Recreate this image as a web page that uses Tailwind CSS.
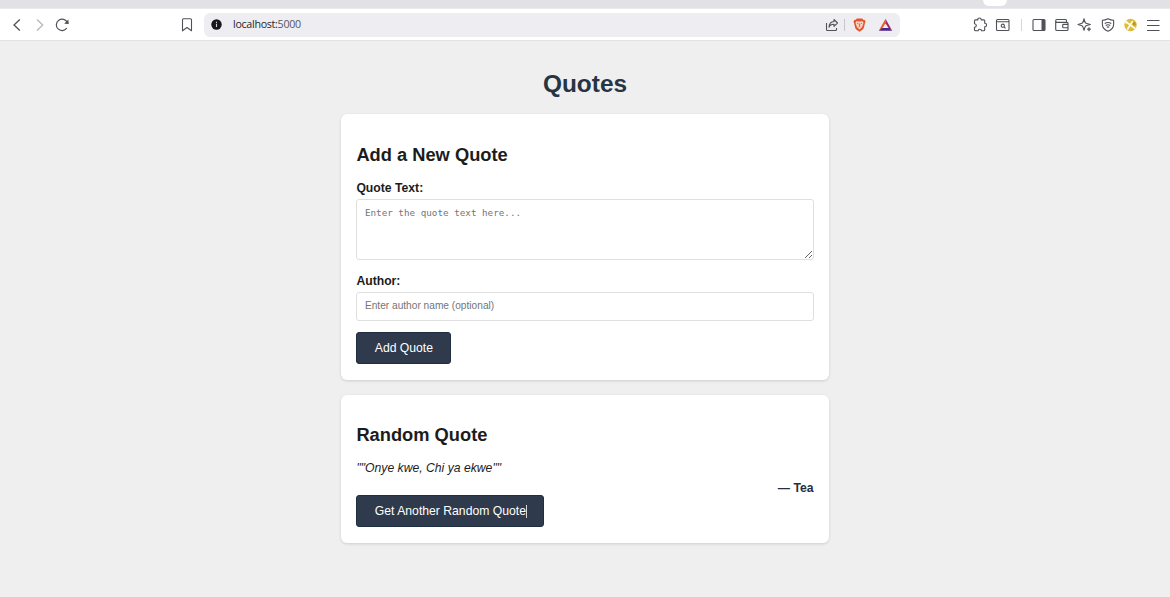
<!DOCTYPE html>
<html lang="en">
<head>
  <meta charset="UTF-8" />
  <meta name="viewport" content="width=device-width, initial-scale=1" />
  <title>Quotes</title>
  <script src="https://cdn.jsdelivr.net/npm/@tailwindcss/browser@4"></script>
</head>
<body class="h-screen overflow-hidden bg-[#efefef] font-['Liberation_Sans',Arial,sans-serif] text-[12.2px] text-[#1c1c1c]">

  <!-- Tab strip -->
  <div class="flex h-[9px] border-b border-[#e9e9ee] bg-[#e1e1e6] pl-[983px]">
    <div class="h-[6px] w-6 rounded-b-md bg-white"></div>
  </div>

  <!-- Toolbar -->
  <div class="flex h-8 items-center border-b border-[#e2e2e2] bg-white text-[#505258]">
    <div class="flex w-[204px] items-center pl-[9px]">
      <svg class="size-4" viewBox="0 0 16 16" fill="none" stroke="currentColor" stroke-width="1.3"><path d="M10.8 2.500 5 8l5.800 5.500" /></svg>
      <svg class="ml-[7px] size-4 text-[#b5b5ba]" viewBox="0 0 16 16" fill="none" stroke="currentColor" stroke-width="1.2"><path d="m5 2.500 5.800 5.500L5 13.500" /></svg>
      <svg class="ml-[6px] size-4" viewBox="0 0 16 16" fill="none" stroke="currentColor" stroke-width="1.2"><path d="M12.800 11A5.700 5.700 0 1 1 13.300 5.700" /><path d="m10.200 6.700 4.600.2-.5-4.300z" fill="currentColor" stroke="none" /></svg>
      <svg class="ml-[109px] size-4" viewBox="0 0 16 16" fill="none" stroke="currentColor" stroke-width="1.1" stroke-linejoin="round"><path d="M3.500 2.700q0-1 1-1h7q1 0 1 1v11.100L8 10.500l-4.500 3.300z" /></svg>
    </div>

    <!-- Address bar -->
    <div class="flex h-6 w-[696px] items-center rounded-md bg-[#eeeef2] pl-[7px]">
      <svg class="size-[11px]" viewBox="0 0 11 11"><circle cx="5.500" cy="5.500" r="5.200" fill="#17181c" /><path d="M5.500 4.800v3.200M5.500 2.800v1.100" stroke="#d5d5da" stroke-width="1.100" /></svg>
      <span class="ml-[11px] w-[590px] font-['Open_Sans','Noto_Sans',sans-serif] text-[10.7px] tracking-[-0.3px] text-[#26272b]">localhost:<span class="text-[#55565c]">5000</span></span>
      <svg class="ml-[2px] size-[14px]" viewBox="0 0 14 14" fill="none" stroke="currentColor" stroke-width="1.100" stroke-linejoin="round"><path d="M1.500 5v6.500q0 1 1 1h8q1 0 1-1V10M9 1.500 12.500 5 9 8.300V6.300Q5 6.300 4 9.300 4.200 4 9 3.500z" /></svg>
      <div class="ml-[5px] h-3 w-px bg-[#c5c5ca]"></div>
      <svg class="ml-[8px] h-[14px] w-[13px]" viewBox="0 0 13 14"><path d="M3.800.5h5.400l1 1.200 1.600.2.700 1.900-.5 1.200-1.300 5.200-1.200 1.500-3 2.100-3-2.100L2.300 10.200 1 5 .5 3.800l.7-1.900 1.600-.2z" fill="#e1562c" /><path d="m3.200 3.200 3.300.3 3.300-.3.700 1.900L9 9.200 6.500 11.600 4 9.200 2.500 5.100z" fill="#f8d3c5" /><path d="M4 5.200 5.500 6M9 5.200 7.500 6M6.500 5.500v3M5.500 9.100l1-.6 1 .6" stroke="#e1562c" stroke-width=".8" fill="none" /></svg>
      <svg class="ml-[12px] h-[14px] w-[15px]" viewBox="0 0 15 14"><path d="M7.500.8v4.400L4.300 10.300.8 12.800z" fill="#ea5a2c" /><path d="m7.500.8 6.700 12-3.500-2.500L7.500 5.200z" fill="#9c2a5f" /><path d="M.8 12.800h13.400l-3.500-2.700H4.300z" fill="#4b2588" /></svg>
    </div>

    <!-- Extensions and browser actions -->
    <div class="flex items-center pl-[72px]">
      <svg class="size-4" viewBox="0 0 16 16" fill="none" stroke="currentColor" stroke-width="1.150" stroke-linejoin="round"><path d="M2.500 3.800q0-1 1-1h2.300q0-1.800 1.700-1.800t1.700 1.800h2.500q1 0 1 1v2.400q1.900 0 1.900 1.800t-1.900 1.800v2.900q0 1-1 1H9.500q0-1.500-1.700-1.500t-1.700 1.500H3.500q-1 0-1-1V10.300Q4.300 10.200 4.300 8.500T2.500 6.700z" /></svg>
      <svg class="ml-[7px] size-4" viewBox="0 0 16 16" fill="none" stroke="currentColor" stroke-width="1.100"><rect x="1.500" y="2.500" width="12.500" height="11" rx="1" /><path d="M1.500 4.700H14M9 9.800l1.500 1.500" /><circle cx="7.800" cy="8.700" r="1.600" /></svg>
      <div class="ml-[10px] h-3 w-px bg-[#d5d5da]"></div>
      <svg class="ml-[9px] size-4" viewBox="0 0 16 16" fill="none" stroke="currentColor" stroke-width="1.100"><rect x="2" y="2.500" width="12" height="11" rx="1" /><path d="M10.500 3H14v10h-3.500z" fill="currentColor" stroke="none" /></svg>
      <svg class="ml-[7px] size-4" viewBox="0 0 16 16" fill="none" stroke="currentColor" stroke-width="1.150" stroke-linejoin="round"><path d="M12.500 5.300V3.500q0-1-1-1H3q-1.300 0-1.300 1.300v8.400q0 1.300 1.300 1.300h10q1 0 1-1V6.300q0-1-1-1H3q-1.300 0-1.300-1.300M14 7.300H9.500q-.8 0-.8.8v1.800q0 .8.8.8H14" /></svg>
      <svg class="ml-[7px] size-4" viewBox="0 0 16 16" fill="none" stroke="currentColor" stroke-width="1.100" stroke-linejoin="round"><path d="M7 1.700Q7.700 5.800 9 6.200l4.300 1.300L9 8.800Q8 9.200 7 13.300 6 9.200 5 8.800L1 7.500l4-1.300Q6.300 5.800 7 1.700z" /><path d="m12 10.200.6 1.400 1.400.6-1.400.6-.6 1.400-.6-1.400-1.400-.6 1.400-.6z" fill="currentColor" stroke-width=".5" /></svg>
      <svg class="ml-[7px] size-4" viewBox="0 0 16 16" fill="none" stroke="currentColor" stroke-width="1.100" stroke-linejoin="round"><path d="M8 1.700q2.700 1.500 5.600 1.600v4.200q0 4.400-5.600 6.800-5.600-2.400-5.600-6.800V3.300Q5.300 3.200 8 1.700zM4.700 6.500q3.300-2 6.600 0M5.700 8.400q2.300-1.300 4.600 0M6.800 10.200q1.200-.6 2.400 0" /></svg>
      <svg class="ml-[7px] size-4" viewBox="0 0 16 16"><circle cx="7.500" cy="8" r="6.200" fill="#dcbc3a" /><path d="M8.500 3.500Q12 4 13.300 8l-3 .5z" fill="#b99a21" /><path d="m2.600 4.500 9.800 7.200M4.300 12.500 9.800 4" stroke="#fffbe8" stroke-width="1.700" /><path d="M1 6.500 3.500 3l1.500 3.500z" fill="#fff" opacity=".7" /></svg>
      <svg class="ml-[6px] size-4" viewBox="0 0 16 16" stroke="currentColor" stroke-width="1.100"><path d="M2 3.500h12.500M2 8.500h12.500M2 13.500h12.500" /></svg>
    </div>
  </div>

  <!-- Page -->
  <main class="mx-auto w-[488px] pt-[28px]">
    <h1 class="text-center text-[24.4px] leading-[29px] font-bold text-[#263444]">Quotes</h1>

    <section class="mt-[16px] h-[266px] rounded-md bg-white pt-[29px] pr-[15.500px] pl-[15.400px] shadow-[0_1px_3px_rgba(0,0,0,0.14)]">
      <h2 class="text-[18.3px] leading-6 font-bold">Add a New Quote</h2>
      <form>
        <label for="quote" class="mt-[13px] block leading-4 font-bold">Quote Text:</label>
        <textarea id="quote" placeholder="Enter the quote text here..." class="mt-[3px] block h-[61px] w-full resize-y rounded-[3px] border border-[#dfdfdf] px-[7.500px] py-[7px] font-['DejaVu_Sans_Mono',monospace] text-[9.28px] leading-3 placeholder:text-[#757575]"></textarea>
        <label for="author" class="mt-[13px] block leading-4 font-bold">Author:</label>
        <input id="author" type="text" placeholder="Enter author name (optional)" class="mt-[3px] block h-[29px] w-full rounded-[3px] border border-[#dfdfdf] px-[7.500px] pb-[2px] text-[10.17px] placeholder:text-[#757575]" />
        <button type="button" class="mt-[11px] block h-8 w-[95px] rounded-[3px] border border-[#202f40] bg-[#2f3b4c] text-white">Add Quote</button>
      </form>
    </section>

    <section class="mt-[15px] h-[148px] rounded-md bg-white pt-[28px] pr-[15.500px] pl-[15.400px] shadow-[0_1px_3px_rgba(0,0,0,0.14)]">
      <h2 class="text-[18.3px] leading-6 font-bold">Random Quote</h2>
      <p class="mt-[13px] leading-4 italic">""Onye kwe, Chi ya ekwe""</p>
      <p class="mt-1 text-right leading-4 font-bold text-[#22303f]">— Tea</p>
      <button type="button" class="-mt-px flex h-8 w-[188px] items-center justify-center rounded-[3px] border border-[#202f40] bg-[#2f3b4c] text-white">Get Another Random Quote<span class="-mr-px h-[13px] w-px bg-white/80"></span></button>
    </section>
  </main>

</body>
</html>
